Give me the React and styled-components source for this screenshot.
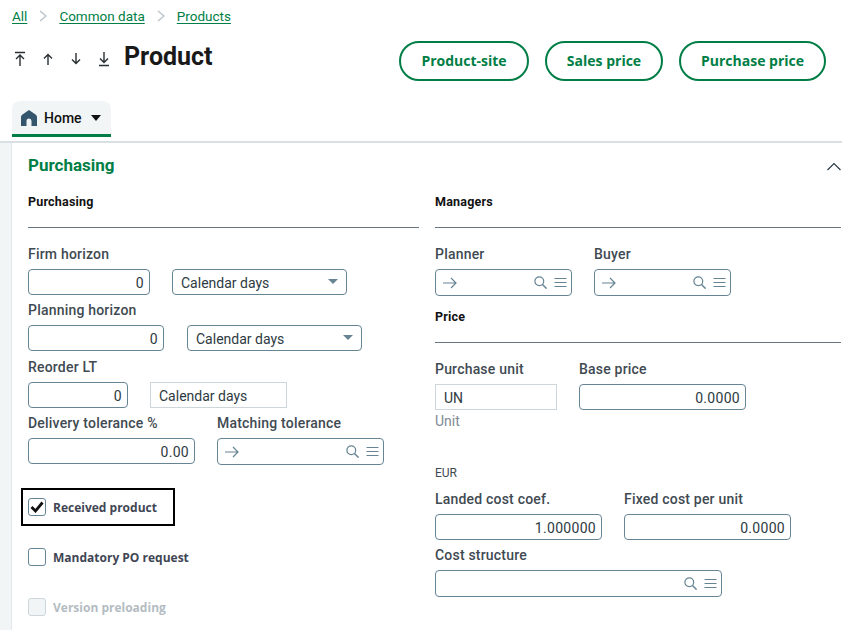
import React from "react";
import styled, { createGlobalStyle } from "styled-components";

const Global = createGlobalStyle`
  html, body { margin: 0; padding: 0; background: #fff; }
  body { font-family: Roboto, "Liberation Sans", sans-serif; color: #1d252b; }
  * { box-sizing: border-box; }
`;
const GREEN = "#007e45";
const Page = styled.div`width: 842px; height: 630px; overflow: hidden; display: flex; flex-direction: column;`;
const Crumbs = styled.nav`display: flex; align-items: center; height: 32px; padding-left: 12px; font-size: 13.5px;`;
const Crumb = styled.a`color: ${GREEN}; text-decoration: underline; text-underline-offset: 2px; cursor: pointer;`;
const CrumbSep = styled.svg`width: 8px; height: 12px; margin: 0 12px 0 12px; fill: none; stroke: #b4bfc5; stroke-width: 1.2;`;
const Header = styled.header`display: flex; justify-content: space-between; height: 69px; padding: 9px 16px 0 12px;`;
const TitleGroup = styled.div`display: flex; align-items: flex-start; height: 34px;`;
const Arrows = styled.div`display: flex; align-items: center; height: 34px; gap: 12px; padding-top: 2px; margin-right: 12px;`;
const ArrowIcon = styled.svg`width: 16px; height: 16px; fill: none; stroke: #2a2f33; stroke-width: 1.4;`;
const Title = styled.h1`margin: 0; font-size: 25px; font-weight: 700; line-height: 31px; color: #191919;`;
const Actions = styled.div`display: flex; gap: 16px;`;
const Pill = styled.button`height: 40px; width: ${p => p.$w}px; border: 2px solid ${GREEN}; border-radius: 20px; background: #fff; color: ${GREEN}; font: 700 14px "Open Sans", sans-serif; padding: 0 0 2px;`;
const Tabs = styled.div`display: flex; padding-left: 12px; height: 42px; border-bottom: 2px solid #d9e0e4;`;
const Tab = styled.div`width: 99px; height: 36px; background: #f2f5f6; border-radius: 8px 8px 0 0; border-bottom: 3px solid ${GREEN}; display: flex; align-items: center; padding: 0 0 0 8px; font-size: 14px; font-weight: 500; color: #111;`;
const HomeIcon = styled.svg`width: 18px; height: 18px; margin-right: 6px; fill: #33566d;`;
const Caret = styled.span`width: 0; height: 0; border-left: 5px solid transparent; border-right: 5px solid transparent; border-top: 6px solid #111; margin-left: 9px;`;
const Body = styled.div`flex: 1; display: flex; min-height: 0;`;
const Rail = styled.div`width: 12px; background: #f2f5f6; border-right: 1px solid #e2e7ea;`;
const Section = styled.section`flex: 1; padding: 10px 0 0 16px; min-width: 0;`;
const SectionHead = styled.div`display: flex; justify-content: space-between; align-items: center; height: 24px; margin-bottom: 17px;`;
const SectionTitle = styled.h2`margin: 0; font-size: 17px; font-weight: 700; color: ${GREEN};`;
const Chevron = styled.svg`width: 14px; height: 9px; margin: 2px 1px 0 0; fill: none; stroke: #2b3a45; stroke-width: 1.2; flex-shrink: 0;`;
const Columns = styled.div`display: flex; gap: 16px;`;
const Col = styled.div`width: ${p => p.$w}px; flex-shrink: 0;`;
const BlockHead = styled.h3`margin: 0 0 14px; height: 34px; font-size: 12.5px; line-height: 16px; letter-spacing: .2px; font-weight: 700; color: #111; border-bottom: 1px solid #66757f;`;
const PriceHead = styled(BlockHead)`margin-top: 13px;`;
const Row = styled.div`display: flex; gap: ${p => p.$gap || 22}px; margin-bottom: ${p => p.$after || 3}px;`;
const Field = styled.div`width: ${p => p.$w}px; flex-shrink: 0;`;
const Label = styled.label`display: block; height: 24px; line-height: 24px; margin-bottom: 3px; font-size: 14px; letter-spacing: .2px; font-weight: 500; color: #3f4a52; white-space: nowrap;`;
const Num = styled.div`height: 26px; border: 1px solid #668494; border-radius: 4px; background: #fff; text-align: right; padding: 0 5px; line-height: 26px; font-size: 14px; color: #2e3a42; letter-spacing: .3px;`;
const Select = styled.div`height: 26px; border: 1px solid #668494; border-radius: 4px; display: flex; align-items: center; justify-content: space-between; padding: 1px 8px 0; font-size: 14px; color: #2e3a42;`;
const SelectCaret = styled.span`width: 0; height: 0; border-left: 5px solid transparent; border-right: 5px solid transparent; border-top: 5px solid #668494; margin-bottom: 2px;`;
const ReadOnly = styled.div`height: 26px; border: 1px solid #ccd6db; padding: 0 8px; line-height: 26px; font-size: 14px; color: #2e3a42;`;
const Lookup = styled.div`height: 27px; border: 1px solid #668494; border-radius: 4px; display: flex; align-items: center; justify-content: space-between; padding: 0 4px 0 6px;`;
const LookupIcon = styled.svg`width: 16px; height: 14px; fill: none; stroke: #668494; stroke-width: 1.2;`;
const LookupTools = styled.div`display: flex; align-items: center; gap: 7px; margin-left: auto;`;
const ToolIcon = styled.svg`width: 13px; height: 13px; fill: none; stroke: #668494; stroke-width: 1.2;`;
const Hint = styled.div`font-size: 14px; line-height: 22px; color: #7f8b93;`;
const Currency = styled.div`margin-top: 30px; margin-bottom: 3px; height: 22px; line-height: 22px; font-size: 12px; color: #3f4a52;`;
const Checks = styled.div`display: flex; flex-direction: column; gap: 32px; margin-top: 33px;`;
const CheckRow = styled.div`position: relative; display: flex; align-items: center; gap: 7px; height: 18px; font: 700 12px "Open Sans", sans-serif; color: ${p => p.$disabled ? "#b4bcc2" : "#3f4654"};`;
const Focus = styled.div`position: absolute; left: -7px; top: -10px; width: 154px; height: 38px; border: 2px solid #000;`;
const Box = styled.span`width: 18px; height: 18px; border: 1px solid ${p => p.$disabled ? "#ccd6db" : "#668494"}; border-radius: 3px; background: ${p => p.$disabled ? "#f2f5f6" : "#fff"}; display: flex; align-items: center; justify-content: center;`;
const CheckMark = styled.svg`width: 14px; height: 12px; fill: none; stroke: #111; stroke-width: 2.8;`;

const Sep = () => <CrumbSep viewBox="0 0 8 12"><path d="M1 1l6 5-6 5" /></CrumbSep>;
const LookupField = ({ arrow = true }) => (
  <Lookup>
    {arrow && <LookupIcon viewBox="0 0 16 14"><path d="M1 7h13M9 2L14 7l-5 5" /></LookupIcon>}
    <LookupTools>
      <ToolIcon viewBox="0 0 13 13"><circle cx="5.3" cy="5.3" r="4.4" /><path d="M8.5 8.5L12.6 12.6" strokeWidth="1.5" /></ToolIcon>
      <ToolIcon viewBox="0 0 13 13"><path d="M0.5 2.5h12M0.5 6.5h12M0.5 10.5h12" /></ToolIcon>
    </LookupTools>
  </Lookup>
);
const NumField = ({ label, value, w }) => <Field $w={w}><Label>{label}</Label><Num>{value}</Num></Field>;
const SelectField = ({ w }) => (
  <Field $w={w}><Label>&nbsp;</Label><Select>Calendar days<SelectCaret /></Select></Field>
);
const LookupLabeled = ({ label, w, arrow }) => <Field $w={w}><Label>{label}</Label><LookupField arrow={arrow} /></Field>;

export default function App() {
  return (
    <Page>
      <Global />
      <Crumbs>
        <Crumb>All</Crumb><Sep /><Crumb>Common data</Crumb><Sep /><Crumb>Products</Crumb>
      </Crumbs>
      <Header>
        <TitleGroup>
          <Arrows>
            <ArrowIcon viewBox="0 0 16 16"><path d="M3 1.5h10M8 15V4.5M4 8l4-4 4 4" /></ArrowIcon>
            <ArrowIcon viewBox="0 0 16 16"><path d="M8 14V3.5M4 7.5l4-4 4 4" /></ArrowIcon>
            <ArrowIcon viewBox="0 0 16 16"><path d="M8 2v10.5M4 8.5l4 4 4-4" /></ArrowIcon>
            <ArrowIcon viewBox="0 0 16 16"><path d="M8 1v10.5M4 7.5l4 4 4-4M3 14.5h10" /></ArrowIcon>
          </Arrows>
          <Title>Product</Title>
        </TitleGroup>
        <Actions>
          <Pill $w={130}>Product-site</Pill>
          <Pill $w={118}>Sales price</Pill>
          <Pill $w={147}>Purchase price</Pill>
        </Actions>
      </Header>
      <Tabs>
        <Tab>
          <HomeIcon viewBox="0 0 18 18"><path d="M9 1L15.5 5.5c1 .7 1.5 1.6 1.5 2.8V17h-5.5v-5a2.5 2.5 0 0 0-5 0v5H1V8.3c0-1.2.5-2.1 1.5-2.8z" /></HomeIcon>
          Home<Caret />
        </Tab>
      </Tabs>
      <Body>
        <Rail />
        <Section>
          <SectionHead>
            <SectionTitle>Purchasing</SectionTitle>
            <Chevron viewBox="0 0 14 9"><path d="M0.5 8L7 1.5 13.5 8" /></Chevron>
          </SectionHead>
          <Columns>
            <Col $w={391}>
              <BlockHead>Purchasing</BlockHead>
              <Row><NumField label="Firm horizon" value="0" w={122} /><SelectField w={175} /></Row>
              <Row $gap={23} $after={4}><NumField label="Planning horizon" value="0" w={136} /><SelectField w={175} /></Row>
              <Row>
                <NumField label="Reorder LT" value="0" w={100} />
                <Field $w={137}><Label>&nbsp;</Label><ReadOnly>Calendar days</ReadOnly></Field>
              </Row>
              <Row>
                <NumField label="Delivery tolerance %" value="0.00" w={167} />
                <LookupLabeled label="Matching tolerance" w={167} />
              </Row>
              <Checks>
                <CheckRow>
                  <Focus />
                  <Box><CheckMark viewBox="0 0 14 12"><path d="M1.5 6l4 4 7-8.5" /></CheckMark></Box>
                  Received product
                </CheckRow>
                <CheckRow><Box />Mandatory PO request</CheckRow>
                <CheckRow $disabled><Box $disabled />Version preloading</CheckRow>
              </Checks>
            </Col>
            <Col $w={406}>
              <BlockHead>Managers</BlockHead>
              <Row>
                <LookupLabeled label="Planner" w={137} />
                <LookupLabeled label="Buyer" w={137} />
              </Row>
              <PriceHead>Price</PriceHead>
              <Row>
                <Field $w={122}><Label>Purchase unit</Label><ReadOnly>UN</ReadOnly><Hint>Unit</Hint></Field>
                <NumField label="Base price" value="0.0000" w={167} />
              </Row>
              <Currency>EUR</Currency>
              <Row>
                <NumField label="Landed cost coef." value="1.000000" w={167} />
                <NumField label="Fixed cost per unit" value="0.0000" w={167} />
              </Row>
              <Row><LookupLabeled label="Cost structure" w={287} arrow={false} /></Row>
            </Col>
          </Columns>
        </Section>
      </Body>
    </Page>
  );
}
